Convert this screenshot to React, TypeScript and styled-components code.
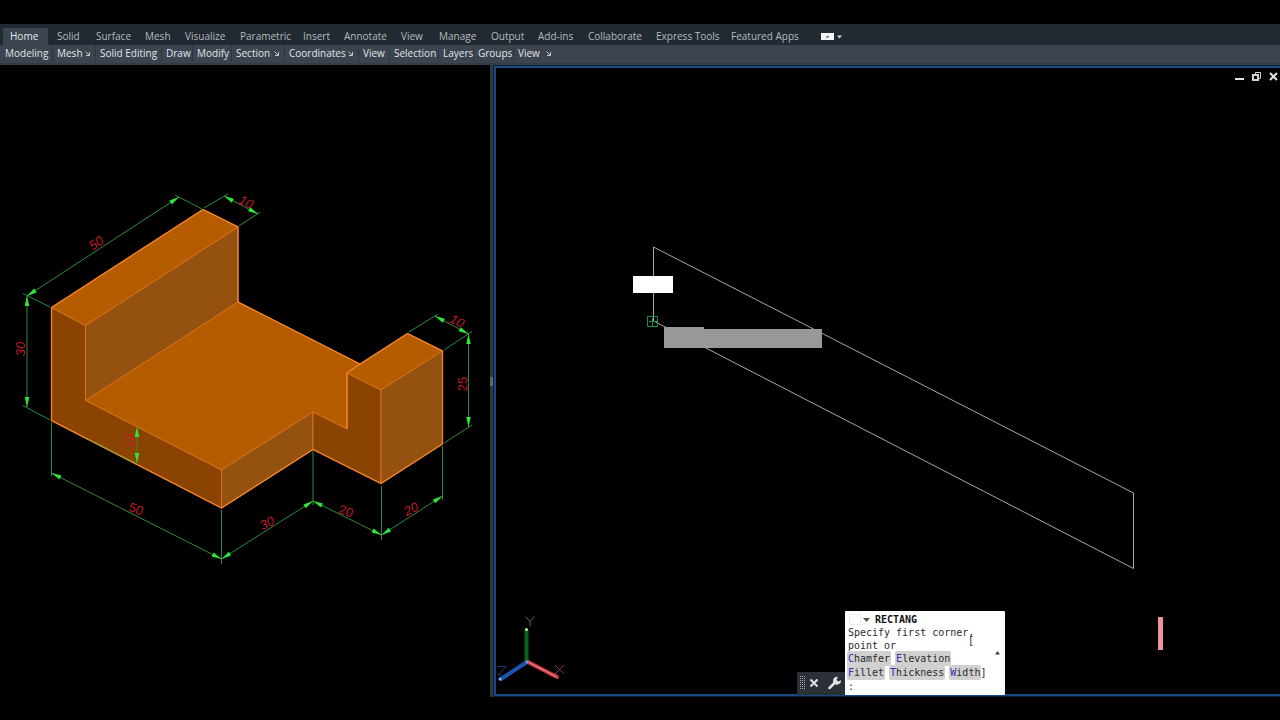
import React from 'react';
import styled, { createGlobalStyle } from 'styled-components';

const Global = createGlobalStyle`
  * { box-sizing: border-box; }
  body { margin: 0; background: #000; font-family: "Open Sans", "Noto Sans", sans-serif; }
  button { font: inherit; color: inherit; border: 0; padding: 0; margin: 0; background: none; cursor: pointer; }
`;

const Page = styled.div`
  min-height: 100vh;
  display: flex;
  flex-direction: column;
  padding: 24px 0 23px;
  background: #000;
`;

const Ribbon = styled.header`
  background: #3b444f;
  border-bottom: 2px solid #333b44;
`;

const TabBar = styled.nav`
  display: flex;
  height: 21px;
  padding: 4px 0 0 3px;
  background: #222a31;
`;

const Tab = styled.button<{ $w: number; $active?: boolean }>`
  width: ${p => p.$w}px;
  height: 17px;
  padding-left: ${p => (p.$active ? 7 : 9)}px;
  text-align: left;
  font-size: 10px;
  line-height: 16px;
  padding-bottom: 1px;
  white-space: nowrap;
  color: ${p => (p.$active ? '#e4e8eb' : '#b4babf')};
  background: ${p => (p.$active ? '#3b444f' : 'transparent')};
`;

const RibbonToggle = styled.button`
  width: 24px;
  height: 17px;
  margin-left: 18px;
  svg { display: block; }
`;

const PanelBar = styled.div`
  display: flex;
  height: 18px;
`;

const Panel = styled.button<{ $w: number }>`
  width: ${p => p.$w}px;
  height: 17px;
  padding: 0 5px 1px 4px;
  display: flex;
  align-items: center;
  justify-content: space-between;
  border-right: 1px solid #2d353e;
  font-size: 10px;
  line-height: 16px;
  white-space: nowrap;
  color: #e0e4e8;
  &:first-child { padding-left: 5px; }
  &:last-child { border-right: 0; }
`;

const Workspace = styled.main`
  flex: 1;
  display: grid;
  grid-template-columns: 490fr 3px 787fr;
  min-height: 480px;
`;

const Drawing = styled.svg`
  display: block;
  width: 100%;
  height: 100%;
`;

const ModelPane = styled.section`
  min-width: 0;
`;

const Splitter = styled.div`
  display: flex;
  align-items: center;
  background: #34383d;
  &::after {
    content: "";
    width: 3px;
    height: 9px;
    background: #63676b;
  }
`;

const ViewPane = styled.section`
  position: relative;
  min-width: 0;
  border: 2px solid #1b4a80;
  border-right: 0;
  box-shadow: 0 0 0 1px #0b1f3b;
  margin: 1px 0 1px 1px;
`;

const WindowControls = styled.div`
  position: absolute;
  top: 3px;
  right: 0;
  display: flex;
  gap: 5px;
  button { width: 12px; height: 12px; }
  svg { display: block; }
`;

const CommandLine = styled.form`
  position: absolute;
  left: 38%;
  bottom: -1px;
  margin-left: 3px;
  display: flex;
  align-items: flex-end;
`;

const CommandTools = styled.div`
  display: flex;
  align-items: center;
  gap: 4px;
  width: 48px;
  height: 23px;
  padding: 0 0 2px 3px;
  background: #2a3036;
  svg { display: block; }
`;

const Prompt = styled.div`
  position: relative;
  width: 160px;
  height: 84px;
  padding: 1px 3px 0;
  background: #fff;
  color: #2c2c30;
  border-radius: 1px;
  font-family: "DejaVu Sans Mono", "Liberation Mono", monospace;
  font-size: 10px;
  line-height: 13px;
  white-space: pre;
`;

const PromptTitle = styled.div`
  display: flex;
  align-items: center;
  height: 14px;
  font-weight: bold;
  color: #111;
  svg { margin-right: 2px; }
`;

const OptionRow = styled.div`
  height: 14px;
  line-height: 14px;
`;

const Option = styled.button`
  height: 13px;
  line-height: 13px;
  background: #d0d0d0;
  box-shadow: 0 0 0 1px #d0d0d0;
  border-radius: 1px;
  &::first-letter { color: #3a2bb0; }
`;

const Bracket = styled.span`
  position: absolute;
  left: 123px;
  top: 23px;
`;

const ScrollUp = styled.button`
  position: absolute;
  right: 4px;
  top: 38px;
  width: 7px;
  height: 7px;
  svg { display: block; }
`;

const tabs: [string, number][] = [
  ['Home', 45], ['Solid', 39], ['Surface', 49], ['Mesh', 40], ['Visualize', 55],
  ['Parametric', 63], ['Insert', 41], ['Annotate', 57], ['View', 38], ['Manage', 52],
  ['Output', 47], ['Add-ins', 50], ['Collaborate', 68], ['Express Tools', 75], ['Featured Apps', 80],
];

const panels: [string, number, boolean?][] = [
  ['Modeling', 53], ['Mesh', 43, true], ['Solid Editing', 66], ['Draw', 31], ['Modify', 39],
  ['Section', 53, true], ['Coordinates', 74, true], ['View', 31], ['Selection', 49],
  ['Layers', 35], ['Groups', 40], ['View', 42, true],
];

const Launcher = () => (
  <svg width="5" height="5" viewBox="0 0 5 5" fill="none" stroke="#c3c9ce" aria-hidden="true">
    <path d="M0.5 0.5l3.5 3.5M4.5 1v3.5H1" />
  </svg>
);

type Pt = [number, number];

/* A dimension line with filled arrow heads at both ends. */
const Dim = ({ a, b }: { a: Pt; b: Pt }) => {
  const angle = (Math.atan2(b[1] - a[1], b[0] - a[0]) * 180) / Math.PI;
  return (
    <g>
      <line x1={a[0]} y1={a[1]} x2={b[0]} y2={b[1]} stroke="#2f8a3a" />
      <path d="M0 0L10 -2.300V2.300Z" fill="#2fe53c" transform={`translate(${a[0]} ${a[1]}) rotate(${angle})`} />
      <path d="M0 0L10 -2.300V2.300Z" fill="#2fe53c" transform={`translate(${b[0]} ${b[1]}) rotate(${angle + 180})`} />
    </g>
  );
};

const Label = ({ x, y, r, children, italic }: { x: number; y: number; r: number; children: string; italic?: boolean }) => (
  <text
    transform={`translate(${x} ${y}) rotate(${r})`}
    textAnchor="middle"
    dominantBaseline="central"
    fontFamily="Liberation Sans, sans-serif"
    fontSize="13"
    fontStyle={italic ? 'italic' : 'normal'}
    fill="#c01822"
  >
    {children}
  </text>
);

const SolidModel = () => (
  <Drawing viewBox="0 65 490 632" role="img" aria-label="Dimensioned solid model">
    <g stroke="#d9721c" strokeWidth="1" strokeLinejoin="round">
      <path fill="#b55b00" d="M85.5 400.5L238 302L360 364L347 373V429L313 412L221.5 470Z" />
      <path fill="#95510f" d="M85.5 325.5L238 227V302L85.5 400.5Z" />
      <path fill="#8a4300" d="M51.500 307.500L85.500 325.500V400.500L221.500 470V508L51.500 420.500Z" />
      <path fill="#b55b00" d="M51.500 307.500L203 209.500L238 227L85.500 325.500Z" />
      <path fill="#95510f" d="M221.500 470L313 412V449.500L221.500 508Z" />
      <path fill="#8a4300" d="M313 412L347 429V373L381 390V483.500L313 449.500Z" />
      <path fill="#b55b00" d="M347 373L407.500 333.500L442.500 351L381 390Z" />
      <path fill="#95510f" d="M381 390L442.500 351V444L381 483.500Z" />
    </g>
    <path
      fill="none"
      stroke="#f5852b"
      strokeWidth="1.3"
      d="M51.500 307.500L203 209.500L238 227V302L360 364L407.500 333.500L442.500 351V444L381 483.500L313 449.500L221.500 508L51.500 420.500ZM347 429V373L360 364"
    />
    <path d="M87 438.500L137 464" stroke="#7fa52c" />
    <g stroke="#2f8a3a" fill="none">
      <path d="M50 307L23 293.500M202 209L175 195M204 208L228 194M239 226L260 212M50 420L23 405.500" />
      <path d="M51.500 422V476M221.500 510V564M313 451V505M381.500 486V540M442.500 446V500" />
      <path d="M409 332L438 314M444 350L472 331.500M444 443L472 425" />
    </g>
    <Dim a={[27, 296]} b={[179, 197]} />
    <Dim a={[224, 196]} b={[258, 214]} />
    <Dim a={[27, 296]} b={[27, 407]} />
    <Dim a={[51.5, 473]} b={[221.5, 559]} />
    <Dim a={[221.5, 559]} b={[313, 501]} />
    <Dim a={[313, 501]} b={[381.5, 535]} />
    <Dim a={[381.5, 535]} b={[442.5, 496]} />
    <Dim a={[468.5, 334]} b={[468.5, 427]} />
    <Dim a={[435, 316]} b={[468.5, 334]} />
    <Dim a={[137, 427]} b={[137, 463]} />
    <Label x={96} y={243} r={-33} italic>50</Label>
    <Label x={246} y={202} r={27} italic>10</Label>
    <Label x={20} y={349} r={-90} italic>30</Label>
    <Label x={136} y={509} r={20}>50</Label>
    <Label x={267} y={523} r={-26} italic>30</Label>
    <Label x={346} y={511} r={20}>20</Label>
    <Label x={411} y={509} r={-26} italic>20</Label>
    <Label x={462} y={384} r={-90}>25</Label>
    <Label x={457} y={321} r={27} italic>10</Label>
    <Label x={130} y={441} r={-90}>10</Label>
  </Drawing>
);

const SketchView = () => (
  <Drawing viewBox="496 68 784 626" preserveAspectRatio="xMinYMin meet" role="img" aria-label="Side view sketch">
    <path d="M653.500 247L1133.500 493V568.500L653.500 321Z" fill="none" stroke="#a6a6a6" />
    <rect x="633" y="276" width="40" height="17" fill="#fff" />
    <path d="M664 327H704V329H822V348H664Z" fill="#989898" />
    <path d="M647.500 316.500H657.500V326.500H647.500ZM652.500 318V326M649 321.500H657" fill="none" stroke="#17914a" />
    <rect x="1158" y="617" width="5" height="33" fill="#ee949c" />
    <g strokeLinecap="round">
      <path d="M526.500 661V631" stroke="#0c6512" strokeWidth="4" />
      <path d="M527 662L501 679" stroke="#1a55b4" strokeWidth="4" />
      <path d="M528 662L557 677" stroke="#c93a45" strokeWidth="4" />
      <path d="M529 662.500L556 676.500" stroke="#f58d90" strokeWidth="1" />
    </g>
    <circle cx="526.500" cy="629.500" r="1.500" fill="#b5e6b2" />
    <circle cx="500" cy="679" r="1.500" fill="#79b4f5" />
    <circle cx="527" cy="662" r="1.500" fill="#6f9fe0" />
    <g fill="none">
      <path d="M525.500 616.500L530 621.500L534.500 616.500M530 621.500V626" stroke="#5a6a5a" />
      <path d="M555 665L564 674M564 665L555 674" stroke="#86303a" />
      <path d="M497 666.500H506L498 675H501" stroke="#2a386f" />
    </g>
  </Drawing>
);

export default function App() {
  return (
    <>
      <Global />
      <Page>
        <Ribbon>
          <TabBar>
            {tabs.map(([name, w], i) => (
              <Tab key={name} $w={w} $active={i === 0}>{name}</Tab>
            ))}
            <RibbonToggle aria-label="Minimize ribbon">
              <svg width="24" height="17" viewBox="0 0 24 17">
                <rect x="1" y="5" width="13" height="7" fill="#f2f4f5" />
                <path d="M5.500 9.500h4L7.500 7.500z" fill="#555d64" />
                <path d="M17 7.500h5l-2.500 3z" fill="#d5d9dc" />
              </svg>
            </RibbonToggle>
          </TabBar>
          <PanelBar>
            {panels.map(([name, w, launcher], i) => (
              <Panel key={i} $w={w}>
                {name}
                {launcher && <Launcher />}
              </Panel>
            ))}
          </PanelBar>
        </Ribbon>
        <Workspace>
          <ModelPane>
            <SolidModel />
          </ModelPane>
          <Splitter />
          <ViewPane>
            <SketchView />
            <WindowControls>
              <button aria-label="Minimize">
                <svg width="12" height="12"><rect x="1" y="7" width="9" height="2" fill="#dfe3e3" /></svg>
              </button>
              <button aria-label="Restore">
                <svg width="12" height="12" fill="none" stroke="#cdd3d2">
                  <path d="M4.500 3V1.500H9.500V7.500H8" />
                  <rect x="2" y="4" width="5" height="5" strokeWidth="2" />
                </svg>
              </button>
              <button aria-label="Close">
                <svg width="12" height="12" stroke="#dfe3e3" strokeWidth="2"><path d="M2 2l7 7M9 2l-7 7" /></svg>
              </button>
            </WindowControls>
            <CommandLine onSubmit={e => e.preventDefault()}>
              <CommandTools>
                <svg width="5" height="14" stroke="#a6acb0" strokeDasharray="1 1">
                  <path d="M0.500 0V14M2.500 0V14M4.500 0V14" />
                </svg>
                <button type="button" aria-label="Close command line">
                  <svg width="10" height="10" stroke="#dde1e3" strokeWidth="2"><path d="M1.500 1.500l7 7M8.500 1.500l-7 7" /></svg>
                </button>
                <button type="button" aria-label="Customize">
                  <svg width="20" height="16" viewBox="0 0 20 16">
                    <path d="M6.500 13L12 7.500" stroke="#e2e5e7" strokeWidth="2.500" strokeLinecap="round" />
                    <path d="M14.800 1.800A4 4 0 1 0 18 5.200L15.200 6.500L13.600 4.900Z" fill="#e2e5e7" />
                  </svg>
                </button>
              </CommandTools>
              <Prompt>
                <PromptTitle>
                  <svg width="25" height="13" fill="none">
                    <rect x="1.500" y="1.500" width="11" height="10" stroke="#c9c9c9" strokeDasharray="1 2" />
                    <path d="M15 5h7l-3.500 4z" fill="#555" />
                  </svg>
                  RECTANG
                </PromptTitle>
                <div>Specify first corner,</div>
                <div>point or</div>
                <OptionRow>
                  <Option type="button">Chamfer</Option> <Option type="button">Elevation</Option>
                </OptionRow>
                <OptionRow>
                  <Option type="button">Fillet</Option> <Option type="button">Thickness</Option> <Option type="button">Width</Option>]
                </OptionRow>
                <div>:</div>
                <Bracket>[</Bracket>
                <ScrollUp type="button" aria-label="Show history">
                  <svg width="7" height="7"><path d="M1 5.500L3.500 2L6 5.500z" fill="#444" /></svg>
                </ScrollUp>
              </Prompt>
            </CommandLine>
          </ViewPane>
        </Workspace>
      </Page>
    </>
  );
}
